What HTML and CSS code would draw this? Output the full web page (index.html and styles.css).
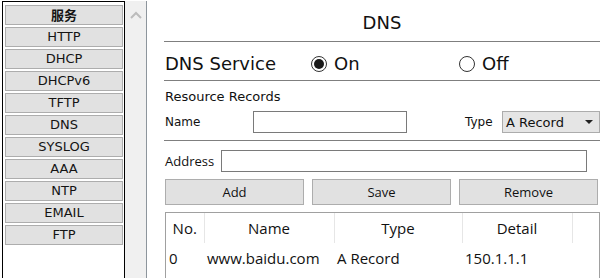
FILE: index.html
```html
<!doctype html>
<html lang="zh">
  <head>
    <meta charset="UTF-8" />
    <title>DNS</title>
    <link rel="stylesheet" href="styles.css">
  </head>
  <body>
    <div class="layout">
      <!-- Services list -->
      <aside class="sidebar">
        <div class="service-list">
          <div class="service-btn service-head">服务</div>
          <div class="service-btn">HTTP</div>
          <div class="service-btn">DHCP</div>
          <div class="service-btn">DHCPv6</div>
          <div class="service-btn">TFTP</div>
          <div class="service-btn">DNS</div>
          <div class="service-btn">SYSLOG</div>
          <div class="service-btn">AAA</div>
          <div class="service-btn">NTP</div>
          <div class="service-btn">EMAIL</div>
          <div class="service-btn">FTP</div>
        </div>
        <div class="scrollbar">
          <svg class="scroll-up" width="12" height="8" viewBox="0 0 12 8">
            <path d="M1 7 L6 2 L11 7" fill="none" stroke="#bcbcbc" stroke-width="2" />
          </svg>
        </div>
      </aside>

      <!-- DNS panel -->
      <main class="panel">
        <h1 class="panel-title">DNS</h1>

        <div class="service-row">
          <span class="service-label">DNS Service</span>
          <label class="radio radio-on"><span class="radio-dot checked"></span>On</label>
          <label class="radio radio-off"><span class="radio-dot"></span>Off</label>
        </div>

        <div class="records">
          <p class="records-title">Resource Records</p>
          <div class="name-row">
            <span class="field-label name-label">Name</span>
            <input class="text-input name-input" type="text" />
            <span class="field-label type-label">Type</span>
            <div class="select">
              <span>A Record</span>
              <span class="select-arrow"></span>
            </div>
          </div>
        </div>

        <div class="address-row">
          <span class="address-label">Address</span>
          <input class="text-input address-input" type="text" />
        </div>

        <div class="actions">
          <button class="action-btn">Add</button>
          <button class="action-btn">Save</button>
          <button class="action-btn">Remove</button>
        </div>

        <div class="table-box">
          <table class="records-table">
            <thead>
              <tr>
                <th class="col-no">No.</th>
                <th class="col-name">Name</th>
                <th class="col-type">Type</th>
                <th class="col-detail">Detail</th>
                <th class="col-rest"></th>
              </tr>
            </thead>
            <tbody>
              <tr>
                <td>0</td>
                <td>www.baidu.com</td>
                <td>A Record</td>
                <td>150.1.1.1</td>
                <td></td>
              </tr>
            </tbody>
          </table>
        </div>
      </main>
    </div>
  </body>
</html>
```

FILE: styles.css
```css
/* Reset */
* {
  margin: 0;
  padding: 0;
  box-sizing: border-box;
}

body {
  background-color: #ffffff;
  font-family: "DejaVu Sans", Verdana, sans-serif;
  color: #111111;
  overflow: hidden;
}

.layout {
  display: flex;
  height: 278px;
}

/* Sidebar */
.sidebar {
  display: flex;
  margin-top: 1px;
  margin-left: 2px;
  height: 300px;
}

.service-list {
  width: 123px;
  border: 1px solid #000000;
  border-bottom: none;
  padding: 3px 1px 0 2px;
  background-color: #ffffff;
}

.service-btn {
  width: 118px;
  height: 20px;
  margin-bottom: 2px;
  background-color: #e1e1e1;
  border: 1px solid #adadad;
  font-size: 13px;
  line-height: 18px;
  text-align: center;
  color: #141414;
}

.service-head {
  font-family: "Noto Sans CJK SC", sans-serif;
  font-weight: bold;
}

.scrollbar {
  width: 22px;
  background-color: #f0f0f0;
  border-right: 1px solid #8d959c;
  display: flex;
  justify-content: center;
  padding-top: 10px;
}

.scroll-up {
  display: block;
}

/* Main panel */
.panel {
  margin-left: 17px;
  width: 436px;
}

.panel-title {
  font-size: 18px;
  font-weight: normal;
  text-align: center;
  line-height: 22px;
  padding-top: 12px;
  height: 42px;
  border-bottom: 1px solid #7f7f7f;
}

.service-row {
  display: flex;
  align-items: center;
  height: 39px;
  padding-top: 5px;
  border-bottom: 1px solid #7f7f7f;
  font-size: 18px;
}

.service-label {
  width: 147px;
  padding-left: 1px;
}

.radio {
  display: flex;
  align-items: center;
  gap: 7px;
}

.radio-on {
  width: 148px;
}

.radio-dot {
  width: 16px;
  height: 16px;
  border: 1px solid #333333;
  border-radius: 50%;
  display: flex;
  align-items: center;
  justify-content: center;
}

.radio-dot.checked::after {
  content: "";
  width: 10px;
  height: 10px;
  border-radius: 50%;
  background-color: #1a1a1a;
}

/* Resource records */
.records {
  padding: 8px 0 7px 1px;
  border-bottom: 1px solid #7f7f7f;
}

.records-title {
  font-size: 13px;
  line-height: 16px;
  margin-bottom: 6px;
}

.name-row {
  display: flex;
  align-items: center;
  height: 22px;
}

.field-label {
  font-size: 12px;
}

.name-label {
  width: 88px;
}

.text-input {
  height: 22px;
  border: 1px solid #7a7a7a;
  background-color: #ffffff;
}

.name-input {
  width: 154px;
}

.type-label {
  margin-left: 58px;
  width: 37px;
}

.select {
  width: 98px;
  height: 22px;
  background-color: #e5e5e5;
  border: 1px solid #acacac;
  display: flex;
  align-items: center;
  justify-content: space-between;
  padding: 0 6px 0 3px;
  font-size: 13px;
}

.select-arrow {
  width: 0;
  height: 0;
  border-left: 4px solid transparent;
  border-right: 4px solid transparent;
  border-top: 4px solid #222222;
}

/* Address */
.address-row {
  display: flex;
  align-items: center;
  gap: 7px;
  padding: 9px 0 0 1px;
  font-family: "Open Sans", sans-serif;
  font-size: 13px;
}

.address-input {
  width: 366px;
}

/* Buttons */
.actions {
  display: flex;
  gap: 8px;
  margin-top: 7px;
  padding-left: 1px;
}

.action-btn {
  width: 139px;
  height: 26px;
  background-color: #e1e1e1;
  border: 1px solid #adadad;
  font-family: "Open Sans", sans-serif;
  font-size: 13px;
  color: #111111;
}

/* Records table */
.table-box {
  margin-top: 7px;
  margin-left: 1px;
  width: 435px;
  height: 80px;
  border: 1px solid #a0a0a0;
  border-bottom: none;
}

.records-table {
  border-collapse: collapse;
  font-family: "Open Sans", sans-serif;
  font-size: 15px;
  table-layout: fixed;
  width: 433px;
}

.records-table th {
  font-weight: normal;
  height: 30px;
  text-align: center;
  border-right: 1px solid #e6e6e6;
}

.records-table th:last-child {
  border-right: none;
}

.records-table td {
  height: 30px;
  padding-left: 3px;
  white-space: nowrap;
}

.col-no {
  width: 38px;
}

.col-name {
  width: 130px;
}

.col-type {
  width: 128px;
}

.col-detail {
  width: 110px;
}
```
